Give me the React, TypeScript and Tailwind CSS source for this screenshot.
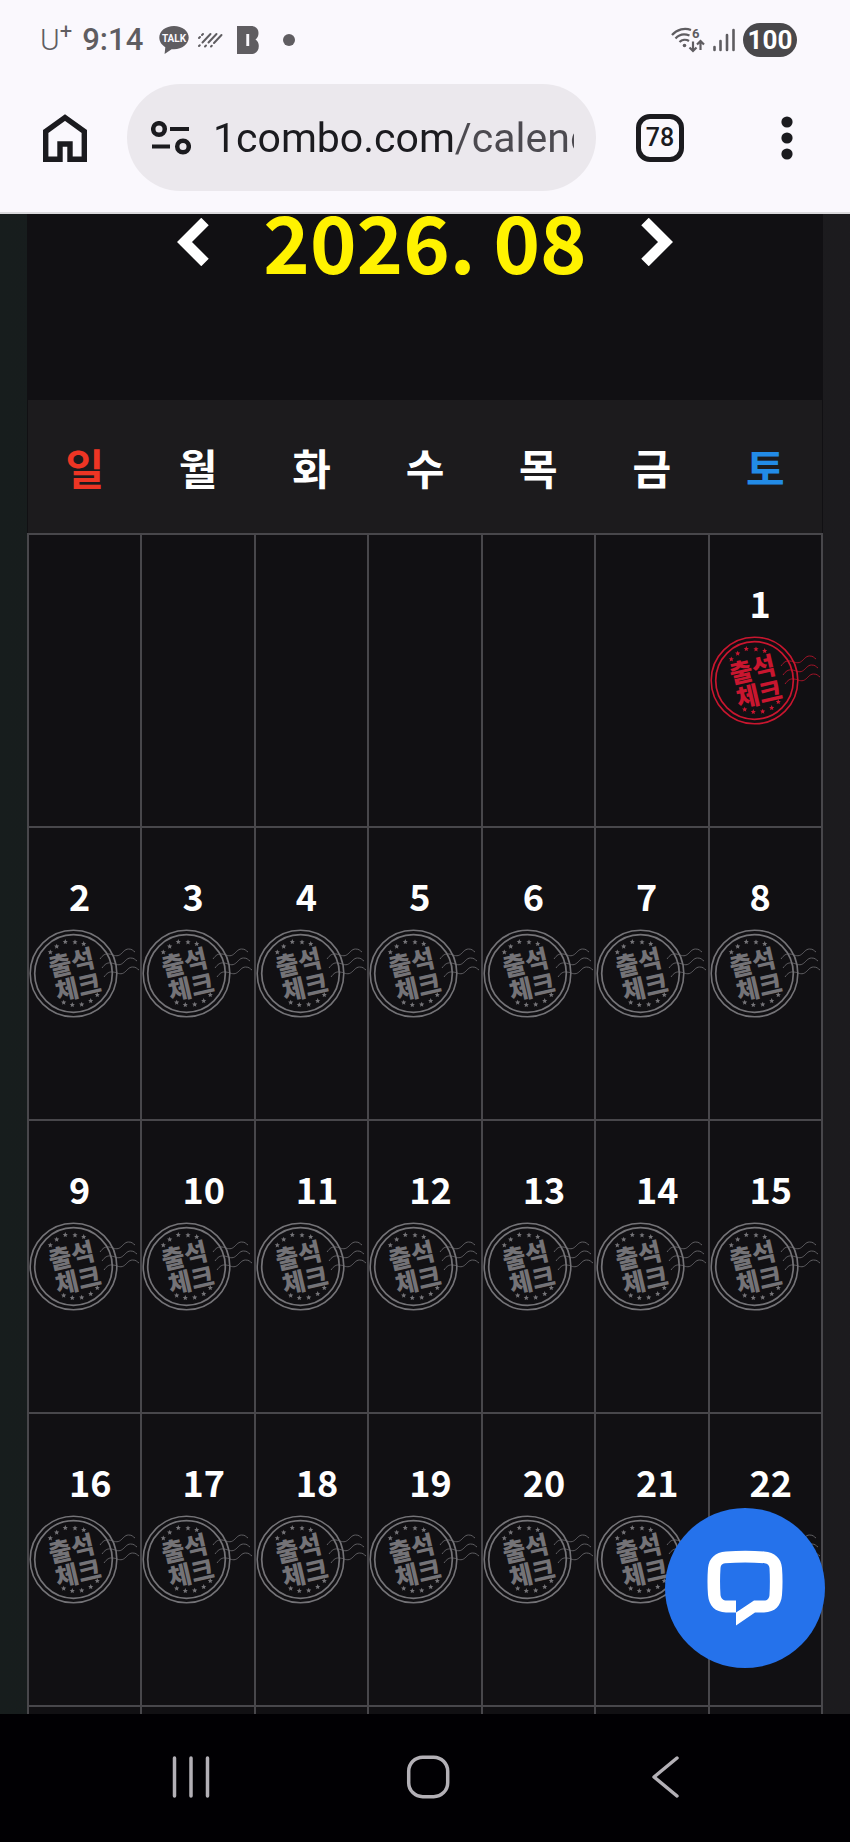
import { useState } from "react";
import clsx from "clsx";

// --- Calendar data ---

const WEEKDAYS = ["일", "월", "화", "수", "목", "금", "토"];

const buildWeeks = (year: number, month: number): (number | null)[][] => {
  const offset = new Date(year, month - 1, 1).getDay();
  const total = new Date(year, month, 0).getDate();
  const count = Math.ceil((offset + total) / 7);
  return Array.from({ length: count }, (_, week) =>
    Array.from({ length: 7 }, (_, i) => {
      const day = week * 7 + i - offset + 1;
      return day > 0 && day <= total ? day : null;
    })
  );
};

// --- Status bar ---

function StatusBar() {
  return (
    <div className="flex items-center justify-between pt-[22px] pr-[53px] pl-10 text-[#5f5d61]">
      <div className="flex h-9 items-center">
        <span className="flex items-start text-[30px] leading-9 font-light">
          U<span className="text-[22px] leading-5 font-normal">+</span>
        </span>
        <span className="ml-2.5 text-[31px] leading-9 font-medium">9:14</span>
        <svg className="ml-4 h-7 w-[30px]" viewBox="0 0 30 28">
          <path
            d="M15 0C6.7 0 .3 5 .3 11.6c0 4.200 2.500 7.600 6 9.600L5.600 28l7-4.800c.8.1 1.600.1 2.400.1 8.200 0 14.700-5.200 14.700-11.700S23.200 0 15 0z"
            fill="currentColor"
          />
          <text
            x="15"
            y="16"
            textAnchor="middle"
            fontSize="10"
            fontWeight="700"
            fill="#faf8fd"
          >
            TALK
          </text>
        </svg>
        <svg className="ml-2 h-4 w-[26px]" viewBox="0 0 26 16">
          <g stroke="currentColor" strokeWidth="2" strokeLinecap="round">
            <path d="M2 6l1-1M5 3l1-1M2 14l.8-.8M5.500 10.500L13.500 2M8 14.500l1-1M11.500 10.500L19.500 2M14 14.500l.8-.8M17 11L24.500 3" />
          </g>
        </svg>
        <svg className="ml-3.5 h-[30px] w-[22px]" viewBox="0 0 22 30">
          <path
            d="M0 1h14c5 0 7.500 3 7.500 7 0 3-1 5-3 6.500 2.200 1.500 3.300 3.700 3.300 6.500 0 5-3 8-8 8H0V1zM9.300 9v12h2.900V9H9.300z"
            fill="currentColor"
            fillRule="evenodd"
          />
        </svg>
        <span className="ml-6 size-3 rounded-full bg-[#5f5d61]" />
      </div>

      <div className="flex h-9 items-center gap-2">
        <svg className="h-7 w-[34px]" viewBox="0 0 34 28" fill="none">
          <g stroke="currentColor" strokeWidth="2.200">
            <path d="M1 9C6 3 14 1.500 20 4M4.500 12.500C8 8.500 13.500 7.500 18.500 9.500M8.500 16c2.500-2.500 6.500-3 9.500-1" />
            <path d="M22 15.500V25M18.500 21.500L22 25l3.500-3.500M29.500 24V15M26 18.500l3.500-3.500 3.500 3.500" />
          </g>
          <circle cx="13.500" cy="19.500" r="1.800" fill="currentColor" />
          <text x="21" y="12" fontSize="13" fontWeight="700" fill="currentColor">
            6
          </text>
        </svg>
        <svg className="h-6 w-[22px]" viewBox="0 0 22 24">
          <path
            d="M1.500 19v3M7.500 13v9M14 7v15M20.500 2v20"
            stroke="currentColor"
            strokeWidth="2.600"
            strokeLinecap="round"
          />
        </svg>
        <span className="flex h-[34px] w-[54px] items-center justify-center rounded-full bg-[#49484b] text-[26px] font-bold text-white">
          100
        </span>
      </div>
    </div>
  );
}

// --- Browser toolbar ---

function Toolbar() {
  return (
    <div className="flex items-center pt-[26px] pr-[57px] pb-[21px] pl-[43px] text-[#1b1b1f]">
      <button aria-label="Home">
        <svg className="h-12 w-11" viewBox="0 0 44 48" fill="none">
          <path
            d="M2.700 17.500L22 3.500l19.300 14V45.300H27V30H17v15.300H2.700z"
            stroke="currentColor"
            strokeWidth="5.400"
          />
        </svg>
      </button>
      <div className="ml-10 flex h-[107px] min-w-0 flex-1 items-center rounded-full bg-[#ebe8ed] pr-[22px] pl-6">
        <svg className="h-[34px] w-10 shrink-0" viewBox="0 0 40 34" fill="none">
          <g stroke="currentColor" strokeWidth="4.500">
            <circle cx="8" cy="8" r="5.800" />
            <circle cx="32" cy="25.500" r="5.800" />
            <path d="M19 8h19M1 25.500h18" strokeWidth="4" />
          </g>
        </svg>
        <input
          type="text"
          aria-label="URL"
          defaultValue="1combo.com/calendar"
          className="ml-[22px] min-w-0 flex-1 bg-linear-to-r from-[#1b1b1f] from-[242px] to-[#4c4a50] to-[242px] bg-clip-text text-[41px] leading-[60px] text-[#1b1b1f] outline-none [-webkit-text-fill-color:transparent]"
        />
      </div>
      <button className="ml-10 size-12 rounded-[14px] border-5 border-[#1b1b1f] text-[25px] leading-none font-medium">
        78
      </button>
      <button aria-label="Menu" className="ml-[97px]">
        <svg className="h-11 w-3" viewBox="0 0 12 44" fill="currentColor">
          <circle cx="6" cy="6" r="5.600" />
          <circle cx="6" cy="22" r="5.600" />
          <circle cx="6" cy="38" r="5.600" />
        </svg>
      </button>
    </div>
  );
}

// --- Attendance stamp ---

const STARS = [
  [21.3, 24],
  [27.7, 18.3],
  [36.3, 13.7],
  [46, 14],
  [54.7, 15.7],
  [34.7, 74.3],
  [43.3, 76.7],
  [52.7, 76.3],
  [61.7, 72.7],
  [68.3, 66.7],
];

const WAVE =
  "M71 31c3-4 5-5.500 9-5s7 3 10.500 1 5-6 9-6 4 1.500 6.500 3";

function Stamp({ checked }: { checked: boolean }) {
  return (
    <svg
      className={clsx(
        "h-[92px] w-[110px]",
        checked ? "text-[#c9162f]" : "text-[#747377]"
      )}
      viewBox="0 0 110 92"
      fill="none"
    >
      <g stroke="currentColor">
        <circle cx="44.500" cy="45.500" r="43.300" strokeWidth="1.600" />
        <circle cx="44.500" cy="45.500" r="38.800" strokeWidth="1.700" />
        <g strokeWidth="1" opacity="0.8">
          <path d={WAVE} />
          <path d={WAVE} transform="translate(2 9)" />
          <path d={WAVE} transform="translate(4 18)" />
        </g>
      </g>
      {STARS.map(([x, y]) => (
        <path
          key={`${x}-${y}`}
          transform={`translate(${x} ${y})`}
          d="M0-2.600L.8-.8 2.600-.7 1.200.6 1.600 2.400 0 1.500-1.600 2.400-1.200.6-2.600-.7-.8-.8z"
          fill="currentColor"
        />
      ))}
      <g
        fill="currentColor"
        fontSize="25"
        fontWeight="900"
        textAnchor="middle"
        transform="rotate(-13 45 46)"
      >
        <text x="45" y="43.500">
          출석
        </text>
        <text x="46" y="69">
          체크
        </text>
      </g>
    </svg>
  );
}

// --- Calendar ---

function Calendar() {
  const [{ year, month }, setDate] = useState({ year: 2026, month: 8 });

  const move = (step: number) => {
    const next = new Date(year, month - 1 + step, 1);
    setDate({ year: next.getFullYear(), month: next.getMonth() + 1 });
  };

  return (
    <section className="mx-[27px] bg-[#111013] font-['Noto_Sans_CJK_KR',sans-serif] font-bold text-white">
      <div className="flex h-[186px] items-start justify-center gap-[54px]">
        <button aria-label="Previous month" className="pt-1" onClick={() => move(-1)}>
          <svg className="h-12 w-8" viewBox="0 0 32 48" fill="none">
            <path d="M28 3.500L7.500 24 28 44.500" stroke="currentColor" strokeWidth="10.600" />
          </svg>
        </button>
        <h1 className="text-[79px] leading-[52px] text-[#fff200]">
          {year}. {String(month).padStart(2, "0")}
        </h1>
        <button aria-label="Next month" className="pt-1" onClick={() => move(1)}>
          <svg className="h-12 w-8" viewBox="0 0 32 48" fill="none">
            <path d="M4 3.500L24.500 24 4 44.500" stroke="currentColor" strokeWidth="10.600" />
          </svg>
        </button>
      </div>

      <table className="w-full table-fixed border-collapse">
        <thead className="bg-[#1c1b1d]">
          <tr className="h-[134px]">
            {WEEKDAYS.map((name, i) => (
              <th
                key={name}
                className={clsx(
                  "text-[42px] leading-[60px]",
                  i === 0 && "text-[#ee3524]",
                  i === 6 && "text-[#228be6]"
                )}
              >
                {name}
              </th>
            ))}
          </tr>
        </thead>
        <tbody>
          {buildWeeks(year, month).map((week, w) => (
            <tr key={w} className="h-[293px]">
              {week.map((day, i) => (
                <td key={i} className="border-2 border-[#48474b] p-0 align-top">
                  {day && (
                    <div className="pt-10">
                      <p className="mb-1.5 pl-10 text-[36px] leading-[54px]">{day}</p>
                      <Stamp checked={day === 1} />
                    </div>
                  )}
                </td>
              ))}
            </tr>
          ))}
        </tbody>
      </table>
    </section>
  );
}

// --- System navigation ---

function NavBar() {
  return (
    <nav className="grid h-32 grid-cols-3 items-center justify-items-center bg-[#010003] pr-[66px] pb-0.5 pl-[72px] text-[#b3b0b6]">
      <button aria-label="Recents">
        <svg className="h-11 w-10" viewBox="0 0 40 44" fill="none">
          <path
            d="M3.500 3v38M20 3v38M36.500 3v38"
            stroke="currentColor"
            strokeWidth="3.500"
            strokeLinecap="round"
          />
        </svg>
      </button>
      <button aria-label="Home screen">
        <svg className="size-11" viewBox="0 0 44 44" fill="none">
          <rect x="2.700" y="2.200" width="39" height="39.500" rx="14" stroke="currentColor" strokeWidth="3.500" />
        </svg>
      </button>
      <button aria-label="Back">
        <svg className="h-11 w-8" viewBox="0 0 32 44" fill="none">
          <path
            d="M28 3L5 22l23 19"
            stroke="currentColor"
            strokeWidth="3.500"
            strokeLinecap="round"
            strokeLinejoin="round"
          />
        </svg>
      </button>
    </nav>
  );
}

export default function App() {
  return (
    <div className="flex h-screen flex-col bg-[#faf8fd] font-[Roboto,sans-serif]">
      <header className="border-b-2 border-[#dad9dc]">
        <StatusBar />
        <Toolbar />
      </header>

      <div className="relative flex min-h-0 flex-1 flex-col">
        <main className="min-h-0 flex-1 overflow-y-auto bg-linear-to-r from-[#171d1d] to-[#1c1b1e] [scrollbar-width:none]">
          <Calendar />
        </main>
        <button
          aria-label="Chat"
          className="absolute right-[25px] bottom-[46px] flex size-40 items-center justify-center rounded-full bg-[#2572eb] text-white"
        >
          <svg className="size-[76px]" viewBox="0 0 76 76" fill="none">
            <path
              d="M19 1.500C32 .5 45 .5 57 1.500 68 2.500 74 8 75 18c.7 9 .7 18 0 27-1 11-7 17-18 17.500h-9L29 75.500V62.500L47 50.500h10c3.500 0 5.200-2 5.500-5.500.5-9 .5-18 0-27-.3-2.800-1.800-4.500-4.800-4.800-13-.8-26-.8-39.700 0-3 .3-4.200 1.800-4.500 4.800-.6 9-.6 18 0 27 .5 3.500 2.500 5.500 6.500 5.500h9v12H19C8 62 2 56 1 45c-.7-9-.7-18 0-27C2 8 8 2.500 19 1.500z"
              fill="currentColor"
            />
          </svg>
        </button>
      </div>

      <NavBar />
    </div>
  );
}
